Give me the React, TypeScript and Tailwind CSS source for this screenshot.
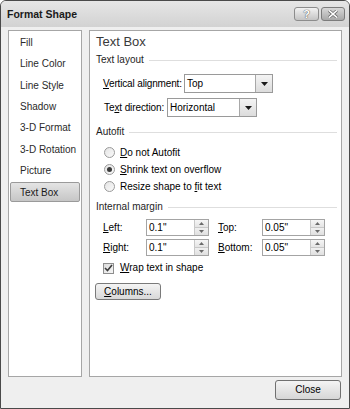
import React from "react";

const FONT = "'Liberation Sans', Arial, sans-serif";

function U({ children }: { children: React.ReactNode }) {
  return <span className="underline underline-offset-[1px]">{children}</span>;
}

function SectionHead({ label }: { label: string }) {
  return (
    <div className="flex items-center h-[14px] leading-[14px] pl-[6px] pr-[4px]">
      <span className="text-[#1e1e1e] whitespace-nowrap">{label}</span>
      <div className="flex-1 h-px bg-[#dedede] ml-[5px]" />
    </div>
  );
}

function Select({ value, width }: { value: string; width: string }) {
  return (
    <div className={`${width} h-[19px] bg-white border border-[#9a9a9a] flex items-center`}>
      <span className="flex-1 pl-[2px] leading-[14px] text-black">{value}</span>
      <div className="w-[17px] h-[17px] border-l border-[#a8a8a8] bg-gradient-to-b from-[#f4f4f4] to-[#dcdcdc] flex items-center justify-center">
        <svg width="7" height="4" viewBox="0 0 7 4">
          <path d="M0 0 H7 L3.5 4 Z" fill="#1a1a1a" />
        </svg>
      </div>
    </div>
  );
}

function Spin({ value }: { value: string }) {
  return (
    <div className="w-[63px] h-[17px] bg-white border border-[#a4a4a4] flex">
      <span className="flex-1 pl-[2px] leading-[15px] text-black">{value}</span>
      <div className="w-[14px] flex flex-col border-l border-[#c8c8c8]">
        <div className="flex-1 bg-gradient-to-b from-[#f6f6f6] to-[#e4e4e4] border-b border-[#c8c8c8] flex items-center justify-center">
          <svg width="5" height="3" viewBox="0 0 5 3">
            <path d="M0 3 H5 L2.5 0 Z" fill="#6a6a6a" />
          </svg>
        </div>
        <div className="flex-1 bg-gradient-to-b from-[#f0f0f0] to-[#e0e0e0] flex items-center justify-center">
          <svg width="5" height="3" viewBox="0 0 5 3">
            <path d="M0 0 H5 L2.5 3 Z" fill="#6a6a6a" />
          </svg>
        </div>
      </div>
    </div>
  );
}

function Radio({ checked, children }: { checked?: boolean; children: React.ReactNode }) {
  return (
    <div className="h-[17px] flex items-center pl-[14px]">
      <div className="w-[11px] h-[11px] rounded-full border border-[#9a9a9a] bg-gradient-to-br from-[#e4e4e4] to-[#fafafa] flex items-center justify-center">
        {checked && <div className="w-[5px] h-[5px] rounded-full bg-[#3a3a3a]" />}
      </div>
      <span className="ml-[5px] leading-[14px] text-black whitespace-nowrap">{children}</span>
    </div>
  );
}

const categories = [
  "Fill",
  "Line Color",
  "Line Style",
  "Shadow",
  "3-D Format",
  "3-D Rotation",
  "Picture",
  "Text Box",
];

export default function App() {
  return (
    <div
      className="w-[350px] h-[409px] bg-[#efefef] border border-[#4a4a4a] rounded-t-[6px] flex flex-col overflow-hidden text-[10px]"
      style={{ fontFamily: FONT }}
    >
      {/* title bar */}
      <div className="h-[26px] shrink-0 bg-gradient-to-b from-[#e6e6e6] to-[#d2d2d2] flex items-start pl-[6px] pr-[4px]">
        <span className="mt-[5px] font-bold text-[10.5px] leading-[16px] text-[#1a1a1a]">
          Format Shape
        </span>
        <div className="ml-auto mt-[6px] flex gap-[2px]">
          <div className="w-[25px] h-[14px] rounded-[3px] border border-[#8c8c8c] bg-gradient-to-b from-[#f2f2f2] to-[#c4c4c4] flex items-center justify-center">
            <span
              className="text-white font-bold text-[11px] leading-[12px]"
              style={{ textShadow: "0 0 1px #555, 0 0 1px #555" }}
            >
              ?
            </span>
          </div>
          <div className="w-[24px] h-[14px] rounded-[3px] border border-[#7c7c7c] bg-gradient-to-b from-[#d8d8d8] to-[#a8a8a8] flex items-center justify-center">
            <svg width="10" height="8" viewBox="0 0 10 8">
              <path d="M1 0.5 L9 7.5 M9 0.5 L1 7.5" stroke="#6a6a6a" strokeWidth="3" />
              <path d="M1 0.5 L9 7.5 M9 0.5 L1 7.5" stroke="#ffffff" strokeWidth="1.6" />
            </svg>
          </div>
        </div>
      </div>

      {/* body */}
      <div className="flex gap-[7px] pl-[7px] pr-[7px] pt-[3px]">
        {/* category list */}
        <div className="w-[74px] h-[347px] bg-white border border-[#a6a6a6] flex flex-col px-[1px]">
          {categories.map((c) => (
            <div
              key={c}
              className={
                c === "Text Box"
                  ? "h-[20px] mt-[1.4px] flex items-center pl-[9px] rounded-[2px] border border-[#9a9a9a] bg-gradient-to-b from-[#e4e4e4] to-[#c6c6c6] text-[#1a1a1a] whitespace-nowrap"
                  : "h-[20px] mt-[1.4px] flex items-center pl-[10px] text-[#2a2a2a] whitespace-nowrap"
              }
            >
              {c}
            </div>
          ))}
        </div>

        {/* settings */}
        <div className="flex-1 h-[347px] bg-white border border-[#a6a6a6] flex flex-col">
          <div className="mt-[3px] pl-[6px] h-[16px] leading-[16px] text-[13px] text-[#3a3a3a]">
            Text Box
          </div>

          <div className="mt-[3px]">
            <SectionHead label="Text layout" />
          </div>
          <div className="mt-[7px] flex items-center pl-[13px]">
            <span className="w-[81px] leading-[14px] text-black whitespace-nowrap tracking-[-0.15px]">
              <U>V</U>ertical alignment:
            </span>
            <Select value="Top" width="w-[89px]" />
          </div>
          <div className="mt-[5px] flex items-center pl-[14px]">
            <span className="w-[63px] leading-[14px] text-black whitespace-nowrap tracking-[-0.1px]">
              Te<U>x</U>t direction:
            </span>
            <Select value="Horizontal" width="w-[90px]" />
          </div>

          <div className="mt-[8px]">
            <SectionHead label="Autofit" />
          </div>
          <div className="mt-[5px] flex flex-col">
            <Radio>
              <U>D</U>o not Autofit
            </Radio>
            <Radio checked>
              <U>S</U>hrink text on overflow
            </Radio>
            <Radio>
              Resize shape to <U>f</U>it text
            </Radio>
          </div>

          <div className="mt-[5px]">
            <SectionHead label="Internal margin" />
          </div>
          <div className="mt-[5px] flex items-center pl-[13px]">
            <span className="w-[43px] leading-[14px] text-black">
              <U>L</U>eft:
            </span>
            <Spin value={'0.1"'} />
            <span className="ml-[9px] w-[44px] leading-[14px] text-black">
              <U>T</U>op:
            </span>
            <Spin value={'0.05"'} />
          </div>
          <div className="mt-[3px] flex items-center pl-[13px]">
            <span className="w-[43px] leading-[14px] text-black">
              <U>R</U>ight:
            </span>
            <Spin value={'0.1"'} />
            <span className="ml-[9px] w-[44px] leading-[14px] text-black">
              <U>B</U>ottom:
            </span>
            <Spin value={'0.05"'} />
          </div>
          <div className="mt-[5px] h-[14px] flex items-center pl-[13px]">
            <div className="w-[11px] h-[11px] border border-[#8e8e8e] bg-gradient-to-br from-[#dcdcdc] to-[#f6f6f6] flex items-center justify-center">
              <svg width="9" height="8" viewBox="0 0 9 8">
                <path d="M1 4 L3.5 6.5 L8 1" stroke="#3c3c3c" strokeWidth="1.6" fill="none" />
              </svg>
            </div>
            <span className="ml-[6px] leading-[14px] text-black whitespace-nowrap">
              <U>W</U>rap text in shape
            </span>
          </div>
          <div className="mt-[8px] pl-[5px]">
            <div className="w-[66px] h-[17px] rounded-[3px] border border-[#7a7a7a] bg-gradient-to-b from-[#f4f4f4] to-[#d8d8d8] flex items-center justify-center leading-[14px] text-black">
              <U>C</U>olumns...
            </div>
          </div>
        </div>
      </div>

      {/* footer */}
      <div className="flex justify-end pr-[8px] mt-[3px]">
        <div className="w-[66px] h-[20px] rounded-[3px] border border-[#707070] bg-gradient-to-b from-[#f4f4f4] to-[#d6d6d6] flex items-center justify-center leading-[14px] text-black">
          Close
        </div>
      </div>
    </div>
  );
}
